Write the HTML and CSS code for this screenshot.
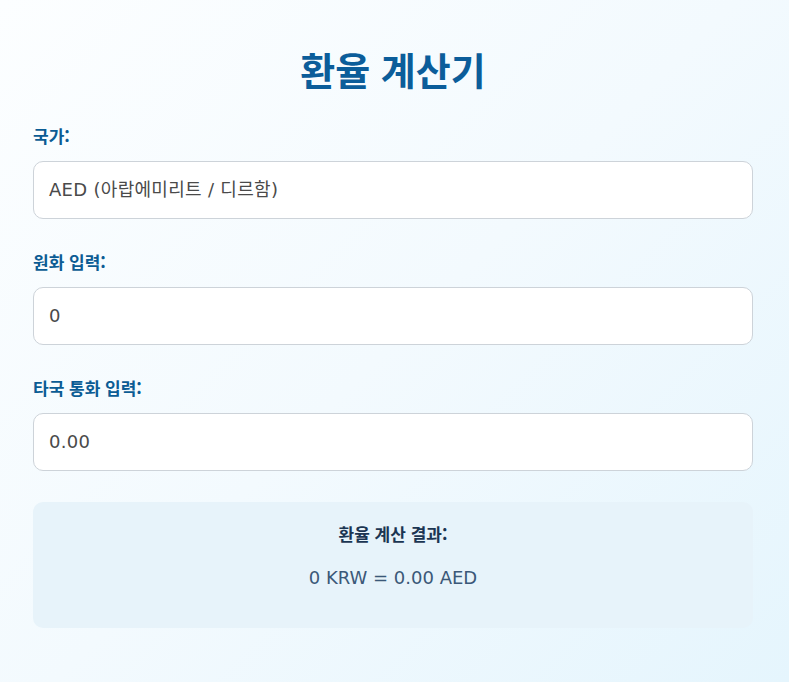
FILE: index.html
```html
<!DOCTYPE html>
<html lang="ko">
<head>
<meta charset="utf-8">
<title>환율 계산기</title>
<link rel="stylesheet" href="styles.css">
</head>
<body>
<main class="calc">
  <h1 class="calc-title">환율 계산기</h1>
  <div class="field">
    <label class="field-label">국가:</label>
    <div class="field-input">AED (아랍에미리트 / 디르함)</div>
  </div>
  <div class="field">
    <label class="field-label">원화 입력:</label>
    <div class="field-input">0</div>
  </div>
  <div class="field">
    <label class="field-label">타국 통화 입력:</label>
    <div class="field-input">0.00</div>
  </div>
  <section class="result">
    <h3 class="result-title">환율 계산 결과:</h3>
    <p class="result-text">0 KRW = 0.00 AED</p>
  </section>
</main>
</body>
</html>
```
FILE: styles.css
```css
html, body {
  margin: 0;
  height: 100%;
}
body {
  background: linear-gradient(135deg, #fcfeff 0%, #f3fafe 50%, #e5f5fd 100%);
  font-family: "DejaVu Sans", "Noto Sans CJK KR", sans-serif;
}
.calc {
  padding: 46px 36px 0 33px;
  display: flex;
  flex-direction: column;
}
.calc-title {
  margin: 0 0 32px;
  text-align: center;
  font-family: "Noto Sans CJK KR", sans-serif;
  font-size: 38px;
  line-height: 46px;
  font-weight: 700;
  color: #0b5d9a;
}
.field {
  display: flex;
  flex-direction: column;
  margin-bottom: 31px;
}
.field-label {
  font-family: "Noto Sans CJK KR", sans-serif;
  font-size: 17px;
  line-height: 24px;
  font-weight: 700;
  color: #0b5c94;
  margin-bottom: 13px;
}
.field-input {
  background: #fff;
  border: 1px solid #cdd3d9;
  border-radius: 10px;
  padding: 16px 15px;
  font-size: 18px;
  line-height: 24px;
  color: #4a4a4a;
  letter-spacing: 0.3px;
}
.result {
  background: #e7f3fa;
  border-radius: 10px;
  padding: 20px 20px 38px;
  text-align: center;
}
.result-title {
  margin: 0 0 20px;
  font-family: "Noto Sans CJK KR", sans-serif;
  font-size: 17px;
  line-height: 24px;
  font-weight: 700;
  color: #1b3552;
}
.result-text {
  margin: 0;
  font-size: 18px;
  line-height: 24px;
  color: #3b5878;
}
```
